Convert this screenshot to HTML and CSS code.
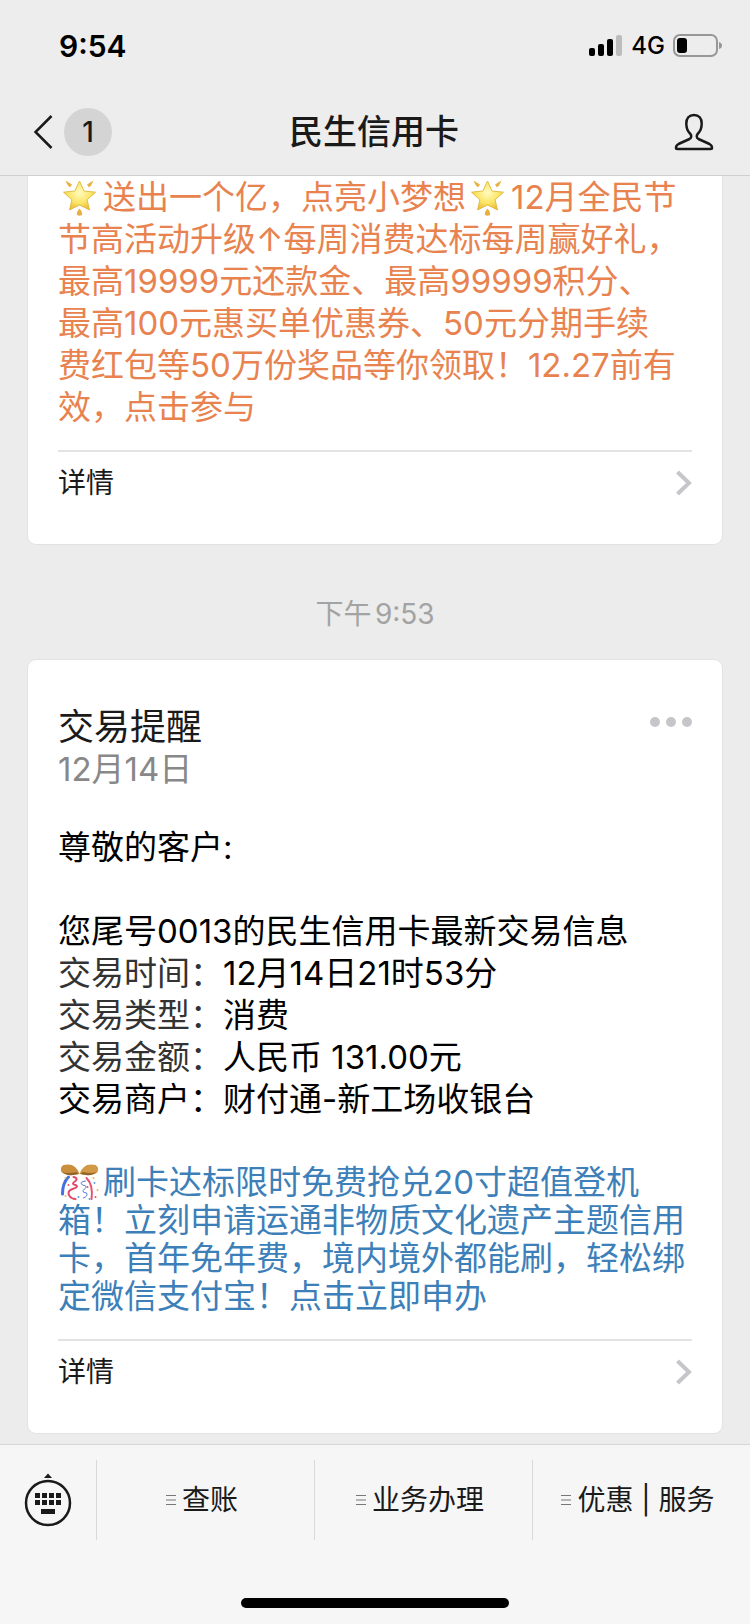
FILE: index.html
```html
<!DOCTYPE html>
<html lang="zh-CN">
<head>
    <meta charset="UTF-8">
    <meta name="viewport" content="width=device-width, initial-scale=1.0">
    <title>民生信用卡</title>
    <link rel="stylesheet" href="styles.css">
</head>
<body>
    <!-- shared shapes -->
    <svg class="defs" width="0" height="0">
        <defs>
            <radialGradient id="gold" cx="50%" cy="40%" r="60%">
                <stop offset="0" stop-color="#fffbc0"/>
                <stop offset="0.6" stop-color="#fbe566"/>
                <stop offset="1" stop-color="#e9b93a"/>
            </radialGradient>
            <symbol id="star" viewBox="0 0 44 38">
                <path d="M21 3 L25.6 13 L37 14.2 L28.6 21.8 L31 32 L21 27 L11 32 L13.4 21.8 L5 14.2 L16.4 13 Z" fill="url(#gold)" stroke="#e5bd48" stroke-width="1" stroke-linejoin="round"/>
                <path d="M7 2.5 L13.5 6.5 L11.5 9.5 Q8.500 7 7 2.500 Z M35 2.500 L28.500 6.500 L30.500 9.500 Q33.500 7 35 2.500 Z M21 30.500 Q24.500 34 23.500 37 Q21 38.500 18.500 37 Q17.500 34 21 30.500 Z" fill="#e8b13f"/>
            </symbol>
            <symbol id="ball" viewBox="0 0 44 38">
                <path d="M21 11 Q17 -1 5 2 Q1 4 3 9 Q9 14 21 11 Z" fill="#c98f3c"/>
                <path d="M21 11 Q25 -1 37 2 Q41 4 39 9 Q33 14 21 11 Z" fill="#d39a45"/>
                <path d="M3 9 Q9 14 20 11 L18 9 Q9 11 3 9 Z M39 9 Q33 14 22 11 L24 9 Q33 11 39 9 Z" fill="#94652a"/>
                <g fill="none" stroke-width="2" stroke-linecap="round">
                    <path d="M10 14 Q4 20 4 31" stroke="#4470e0" stroke-width="3"/>
                    <path d="M15 14 Q20 15 17 18 Q12 21 17 22 Q21 24 14 26 Q8 28 11 33 Q13 36 17 36" stroke="#e04a68"/>
                    <path d="M27 18 Q20 19 24 22 Q30 23 26 26 Q22 29 28 30 Q30 33 25 35" stroke="#5573d0" stroke-width="1"/>
                    <path d="M28 15 Q35 22 33 36" stroke="#e5506c"/>
                </g>
                <g fill="#5aa0dd"><circle cx="36" cy="20" r="1"/><circle cx="20" cy="34" r="1"/><circle cx="31" cy="36" r="1"/></g>
                <g fill="#e2556b"><circle cx="10" cy="22" r="1"/><circle cx="29" cy="24" r="1"/><circle cx="37" cy="34" r="1"/></g>
                <g fill="#ecb64c"><circle cx="7" cy="15" r="1"/><circle cx="35" cy="15" r="1"/><circle cx="39" cy="27" r="1"/><circle cx="7" cy="33" r="1"/></g>
            </symbol>
            <symbol id="chevron" viewBox="0 0 16 26">
                <path d="M1.500 2 L13 13 L1.500 24" fill="none" stroke="#c6c6ca" stroke-width="4"/>
            </symbol>
            <symbol id="lines" viewBox="0 0 10 12">
                <path d="M0 1.500 H10 M0 6 H10 M0 10.500 H10" stroke="#777" stroke-width="1"/>
            </symbol>
        </defs>
    </svg>

    <header class="header">
        <div class="status">
            <span class="clock">9:54</span>
            <div class="signals">
                <svg width="34" height="22" viewBox="0 0 34 22">
                    <rect x="0" y="13" width="6" height="8" rx="2"/>
                    <rect x="9" y="9" width="6" height="12" rx="2"/>
                    <rect x="18" y="4" width="6" height="17" rx="2"/>
                    <rect x="27" y="0" width="6" height="21" rx="2" fill="#bdbdbd"/>
                </svg>
                <span class="network">4G</span>
                <svg width="50" height="24" viewBox="0 0 50 24">
                    <rect x="1" y="1" width="43" height="21" rx="6" fill="none" stroke="#979797" stroke-width="2"/>
                    <rect x="4" y="4" width="10" height="15" rx="3"/>
                    <path d="M46 8 Q49 9 49 11.500 Q49 14 46 15 Z" fill="#979797"/>
                </svg>
            </div>
        </div>
        <div class="navbar">
            <button class="back" aria-label="返回">
                <svg width="20" height="34" viewBox="0 0 20 34">
                    <path d="M17.500 1 L1.500 17 L17.500 33" fill="none" stroke="#1a1a1a" stroke-width="2.500"/>
                </svg>
                <span class="badge">1</span>
            </button>
            <h1>民生信用卡</h1>
            <button class="profile" aria-label="账号信息">
                <svg width="40" height="38" viewBox="0 0 40 38">
                    <path d="M20 2 C15 2 12.300 5.500 12.300 10.500 C12.300 15.500 14 18.500 16 20.500 C18 22.500 17.500 25 15.500 26 L4.500 31 C2.500 32 2 33.500 2 35 Q2 36 3.500 36 H36.500 Q38 36 38 35 C38 33.500 37.500 32 35.500 31 L24.500 26 C22.500 25 22 22.500 24 20.500 C26 18.500 27.700 15.500 27.700 10.500 C27.700 5.500 25 2 20 2 Z" fill="none" stroke="#1a1a1a" stroke-width="2.500" stroke-linejoin="round"/>
                </svg>
            </button>
        </div>
    </header>

    <main class="chat">
        <article class="card card-cut">
            <p class="promo">
                <svg class="emoji" role="img" aria-label="🌟"><use href="#star"/></svg>送出一个亿，点亮小梦想<svg class="emoji" role="img" aria-label="🌟"><use href="#star"/></svg>12月全民节<br>
                节高活动升级↑每周消费达标每周赢好礼，<br>
                最高19999元还款金、最高99999积分、<br>
                最高100元惠买单优惠券、50元分期手续<br>
                费红包等50万份奖品等你领取！12.27前有<br>
                效，点击参与
            </p>
            <a class="detail" href="#">
                <span>详情</span>
                <svg width="16" height="26"><use href="#chevron"/></svg>
            </a>
        </article>

        <time class="time">下午9:53</time>

        <article class="card">
            <div class="card-head">
                <div>
                    <h2>交易提醒</h2>
                    <p class="date">12月14日</p>
                </div>
                <button class="more" aria-label="更多"><i></i><i></i><i></i></button>
            </div>
            <div class="message">
                <p>尊敬的客户:</p>
                <p>
                    您尾号0013的民生信用卡最新交易信息<br>
                    <span class="label">交易时间：</span>12月14日21时53分<br>
                    <span class="label">交易类型：</span>消费<br>
                    <span class="label">交易金额：</span>人民币 131.00元<br>
                    交易商户：财付通-新工场收银台
                </p>
            </div>
            <p class="offer">
                <svg class="emoji" role="img" aria-label="🎊"><use href="#ball"/></svg>刷卡达标限时免费抢兑20寸超值登机<br>
                箱！立刻申请运通非物质文化遗产主题信用<br>
                卡，首年免年费，境内境外都能刷，轻松绑<br>
                定微信支付宝！点击立即申办
            </p>
            <a class="detail" href="#">
                <span>详情</span>
                <svg width="16" height="26"><use href="#chevron"/></svg>
            </a>
        </article>
    </main>

    <footer class="footer">
        <nav class="menu">
            <button class="keyboard" aria-label="键盘">
                <svg width="48" height="54" viewBox="0 0 48 54">
                    <path d="M20 5 L24 0.500 L28 5 Z" fill="#1a1a1a"/>
                    <circle cx="24" cy="30" r="22" fill="none" stroke="#1a1a1a" stroke-width="2.500"/>
                    <path d="M11 20h5v5h-5z M18 20h5v5h-5z M25 20h5v5h-5z M32 20h5v5h-5z M11 27h5v5h-5z M18 27h5v5h-5z M25 27h5v5h-5z M32 27h5v5h-5z M17 36h14v5h-14z" fill="#1a1a1a"/>
                </svg>
            </button>
            <button class="menu-item"><svg width="10" height="12"><use href="#lines"/></svg>查账</button>
            <button class="menu-item"><svg width="10" height="12"><use href="#lines"/></svg>业务办理</button>
            <button class="menu-item"><svg width="10" height="12"><use href="#lines"/></svg>优惠 | 服务</button>
        </nav>
        <div class="home-bar"></div>
    </footer>
</body>
</html>
```

FILE: styles.css
```css
* {
    box-sizing: border-box;
}
body {
    margin: 0;
    min-height: 100vh;
    display: flex;
    flex-direction: column;
    background-color: #ececec;
    color: #1a1a1a;
    font-family: Inter, "Noto Sans CJK SC", sans-serif;
    font-size: 33px;
    line-height: 42px;
}
h1, h2, p {
    margin: 0;
}
svg {
    display: block;
    flex: none;
}
button {
    padding: 0;
    border: none;
    background: none;
    color: inherit;
    font: inherit;
    cursor: pointer;
}
.defs {
    position: absolute;
}

/* top bar */
.header {
    border-bottom: 1px solid #cfcfcf;
    background-color: #ededed;
}
.status {
    height: 88px;
    padding: 3px 27px 0 59px;
    display: flex;
    align-items: center;
    justify-content: space-between;
}
.clock {
    color: #000;
    font-size: 30px;
    font-weight: 600;
}
.signals {
    display: flex;
    align-items: center;
    gap: 8px;
}
.network {
    color: #000;
    font-size: 24px;
    font-weight: 500;
}
.navbar {
    height: 87px;
    padding: 0 36px 0 34px;
    display: grid;
    grid-template-columns: 1fr auto 1fr;
    align-items: center;
}
.back {
    display: flex;
    align-items: center;
    gap: 10px;
    justify-self: start;
}
.badge {
    width: 48px;
    height: 48px;
    border-radius: 50%;
    background-color: #d4d4d4;
    font-size: 28px;
    font-weight: 500;
    line-height: 48px;
}
h1 {
    font-size: 34px;
    font-weight: 500;
}
.profile {
    justify-self: end;
}

/* messages */
.chat {
    flex: 1;
    padding: 0 27px 9px;
}
.card {
    padding: 46px 30px 40px;
    border: 1px solid #e2e2e2;
    border-radius: 9px;
    background-color: #fff;
    white-space: nowrap;
}
.card-cut {
    padding-top: 0;
    border-top: none;
    border-radius: 0 0 9px 9px;
}
.promo {
    color: #e8834f;
    text-autospace: no-autospace;
}
.emoji {
    display: inline-block;
    width: 45px;
    height: 38px;
    vertical-align: -7px;
}
.detail {
    margin-top: 22px;
    padding-top: 10px;
    display: flex;
    align-items: center;
    justify-content: space-between;
    border-top: 2px solid #e3e3e3;
    color: inherit;
    font-size: 28px;
    text-decoration: none;
}
.time {
    padding: 48px 0 24px;
    display: block;
    color: #a3a3a3;
    font-size: 28px;
    text-align: center;
    text-autospace: normal;
}
.card-head {
    display: flex;
    align-items: flex-start;
    justify-content: space-between;
}
h2 {
    font-size: 36px;
    font-weight: 400;
}
.date {
    color: #888;
}
.more {
    padding-top: 11px;
    display: flex;
    gap: 6px;
}
.more i {
    width: 10px;
    height: 10px;
    border-radius: 50%;
    background-color: #c6c6ca;
}
.message {
    margin-top: 36px;
    color: #000;
}
.message p {
    margin-bottom: 42px;
}
.label {
    color: #333;
}
.offer {
    padding: 1px 0 2px;
    color: #3d7fb8;
    line-height: 38px;
}

/* bottom menu */
.footer {
    height: 180px;
    border-top: 1px solid #d6d6d6;
    background-color: #f6f6f6;
}
.menu {
    height: 80px;
    margin-top: 15px;
    display: grid;
    grid-template-columns: 96px 1fr 1fr 1fr;
}
.keyboard {
    display: flex;
    align-items: center;
    justify-content: center;
}
.menu-item {
    padding-right: 7px;
    display: flex;
    align-items: center;
    justify-content: center;
    gap: 6px;
    border-left: 1px solid #d9d9d9;
    font-size: 28px;
    white-space: nowrap;
}
.home-bar {
    width: 268px;
    height: 10px;
    margin: 58px auto 0;
    border-radius: 5px;
    background-color: #000;
}
```
